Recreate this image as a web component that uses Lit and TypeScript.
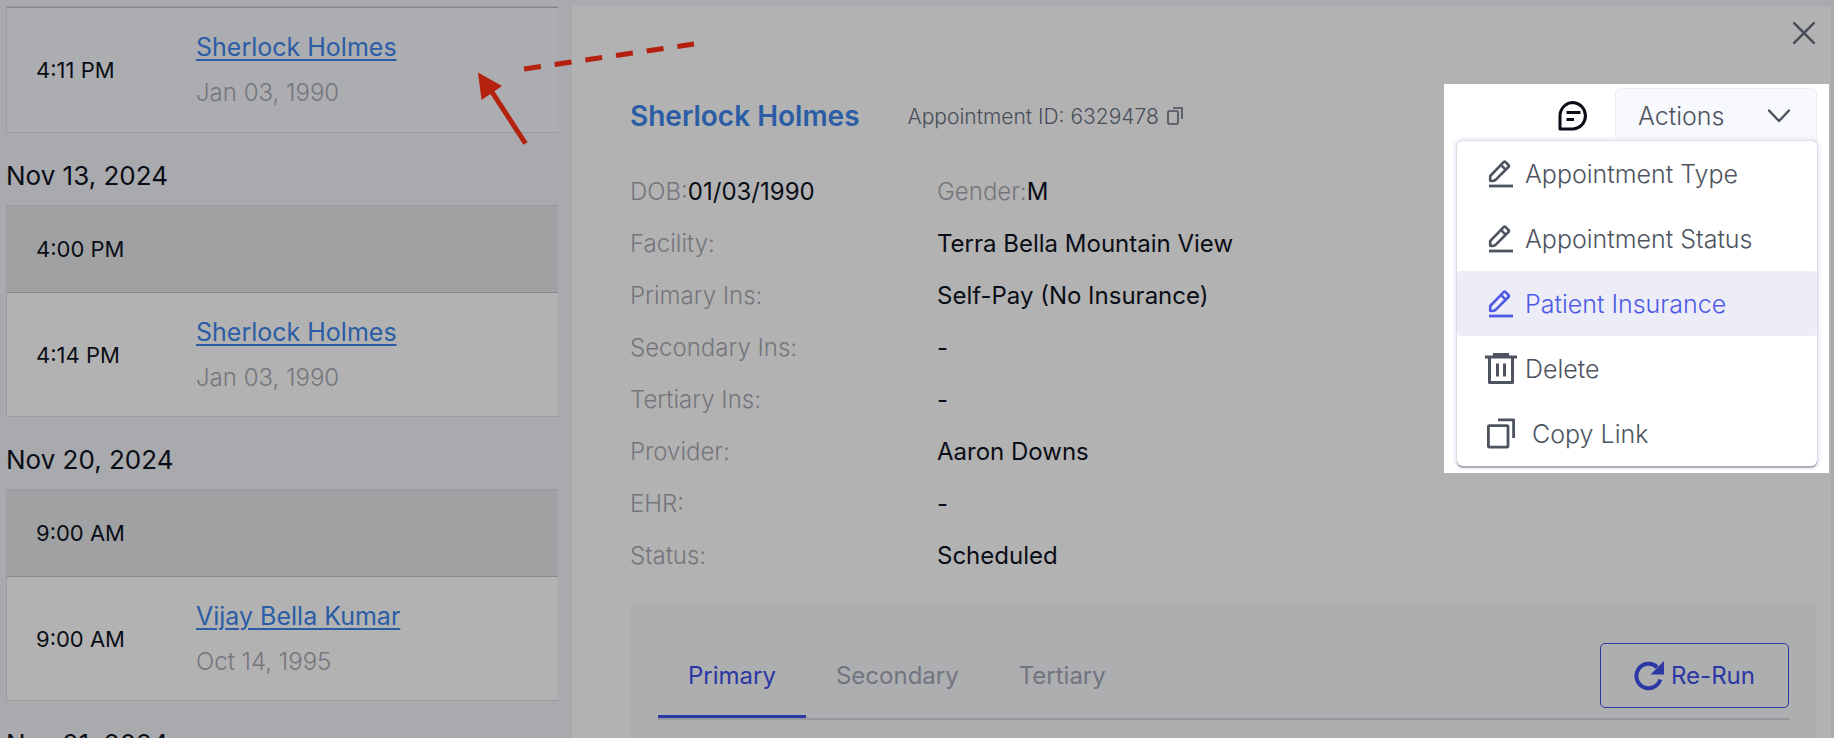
import { LitElement, html, css, svg, nothing } from "lit";
import { customElement, state } from "lit/decorators.js";
import { classMap } from "lit/directives/class-map.js";

interface Visit {
  time: string;
  name: string;
  born: string;
}

interface Day {
  date?: string;
  slot?: string;
  visits: Visit[];
}

const DAYS: Day[] = [
  { visits: [{ time: "4:11 PM", name: "Sherlock Holmes", born: "Jan 03, 1990" }] },
  {
    date: "Nov 13, 2024",
    slot: "4:00 PM",
    visits: [{ time: "4:14 PM", name: "Sherlock Holmes", born: "Jan 03, 1990" }],
  },
  {
    date: "Nov 20, 2024",
    slot: "9:00 AM",
    visits: [{ time: "9:00 AM", name: "Vijay Bella Kumar", born: "Oct 14, 1995" }],
  },
  { date: "Nov 21, 2024", visits: [] },
];

const DETAILS: [string, string][] = [
  ["Facility:", "Terra Bella Mountain View"],
  ["Primary Ins:", "Self-Pay (No Insurance)"],
  ["Secondary Ins:", "-"],
  ["Tertiary Ins:", "-"],
  ["Provider:", "Aaron Downs"],
  ["EHR:", "-"],
  ["Status:", "Scheduled"],
];

const pencil = svg`
  <g fill="none" stroke="currentColor" stroke-width="2.600" stroke-linejoin="round">
    <path d="M5.2 22.800V18L18.600 4.200Q19.600 3.200 20.600 4.200L23.400 7Q24.400 8 23.400 9L10.600 21.800Q8.600 23.600 5.200 22.800Z"/>
    <path d="M16.200 7.200L20.600 11.600"/>
    <path d="M4 28H28" stroke-width="2.800"/>
  </g>`;

const trash = svg`
  <g fill="none" stroke="currentColor">
    <path d="M4.500 5V29.500H27.500V5" stroke-width="3" stroke-linejoin="round"/>
    <path d="M0 4H32" stroke-width="3"/>
    <path d="M8 1.500H24" stroke-width="4"/>
    <path d="M12.500 10.500V23.500M19.500 10.500V23.500" stroke-width="3"/>
  </g>`;

const copy = svg`
  <g fill="none" stroke="currentColor" stroke-width="2.800" stroke-linejoin="round">
    <rect x="3.400" y="7.600" width="19.600" height="21.600" rx="1"/>
    <path d="M13 1.800H28.600V20"/>
  </g>`;

const MENU = [
  { label: "Appointment Type", icon: pencil },
  { label: "Appointment Status", icon: pencil },
  { label: "Patient Insurance", icon: pencil },
  { label: "Delete", icon: trash },
  { label: "Copy Link", icon: copy, wide: true },
];

const TABS = ["Primary", "Secondary", "Tertiary"];

@customElement("visit-list")
export class VisitList extends LitElement {
  static styles = css`
    :host {
      display: block;
      padding: 6px 14px 0 6px;
    }
    h2 {
      margin: 0;
      padding-top: 14px;
      font-size: 26px;
      font-weight: 400;
      line-height: 58px;
    }
    .card {
      border: 1px solid #9b9c9f;
      border-right: 0;
    }
    .slot {
      padding-left: 29px;
      background: #a0a1a3;
      border-bottom: 1px solid #86888f;
      font-size: 22px;
      line-height: 86px;
    }
    .visit {
      display: grid;
      grid-template-columns: 160px 1fr;
      align-items: center;
      padding: 16px 0 15px 29px;
      background: #b2b2b2;
      line-height: 46px;
      font-size: 25px;
    }
    .current {
      padding-bottom: 16px;
      border-top: 1px solid #838487;
      background: #acadb1;
    }
    .time {
      font-size: 22px;
    }
    .name {
      color: #2a5da5;
      text-decoration-thickness: 2px;
      text-underline-offset: 3px;
    }
    .born {
      color: #74767d;
      font-size: 24px;
      font-weight: 300;
    }
  `;

  render() {
    return DAYS.map(
      (day) => html`
        ${day.date ? html`<h2>${day.date}</h2>` : nothing}
        ${day.visits.length
          ? html`<div class="card">
              ${day.slot ? html`<div class="slot">${day.slot}</div>` : nothing}
              ${day.visits.map(
                (v) => html`<div class=${classMap({ visit: true, current: !day.slot })}>
                  <span class="time">${v.time}</span>
                  <div>
                    <a class="name" href="#">${v.name}</a>
                    <div class="born">${v.born}</div>
                  </div>
                </div>`
              )}
            </div>`
          : nothing}
      `
    );
  }
}

@customElement("actions-menu")
export class ActionsMenu extends LitElement {
  static styles = css`
    :host {
      position: relative;
      display: flex;
      align-items: center;
      gap: 26px;
      height: 56px;
      margin-left: auto;
      color: #4d5460;
    }
    button {
      margin: 0;
      border: 0;
      background: none;
      font: inherit;
      color: inherit;
      cursor: pointer;
    }
    svg {
      display: block;
      flex: none;
    }
    .spotlight {
      position: absolute;
      top: -4px;
      right: -12px;
      width: 385px;
      height: 389px;
      background: #fff;
    }
    .chat {
      position: relative;
      padding: 0;
      color: #0a0d16;
    }
    .toggle {
      position: relative;
      display: flex;
      align-items: center;
      justify-content: space-between;
      align-self: stretch;
      width: 202px;
      padding: 0 26px 0 22px;
      border: 1px solid #ededf8;
      border-radius: 5px;
      background: #f8f9fc;
      font-size: 25px;
      font-weight: 300;
    }
    .menu {
      position: absolute;
      top: 53px;
      right: 0;
      width: 360px;
      margin: 0;
      padding: 0;
      list-style: none;
      border-radius: 6px;
      background: #fff;
      box-shadow: 0 2px 1px #a9a9b2, 0 0 0 1px #dfe0ea, 0 0 3px 3px #ececf7;
    }
    .item {
      display: flex;
      align-items: center;
      gap: 8px;
      width: 100%;
      height: 65px;
      padding: 0 0 0 28px;
      border-radius: 4px;
      font-size: 25px;
      font-weight: 300;
    }
    .wide {
      gap: 15px;
    }
    .active {
      background: #ededf8;
      color: #4f5ae6;
    }
  `;

  render() {
    return html`
      <div class="spotlight"></div>
      <button class="chat" aria-label="Notes">
        <svg width="32" height="32" viewBox="0 0 32 32" fill="none" stroke="currentColor" stroke-width="3">
          <path d="M3 29V15.500A13.300 13.500 0 0 1 16.300 2.500A13.300 13.300 0 0 1 16.300 29Z" stroke-linejoin="round" />
          <path d="M9.500 12.500H23.500M9.500 19.500H17" />
        </svg>
      </button>
      <button class="toggle" aria-expanded="true">
        Actions
        <svg width="22" height="14" viewBox="0 0 22 14" fill="none" stroke="currentColor" stroke-width="2.500">
          <path d="M1 1.500L11 12L21 1.500" stroke-linecap="round" stroke-linejoin="round" />
        </svg>
      </button>
      <ul class="menu">
        ${MENU.map(
          (m) => html`<li>
            <button class=${classMap({ item: true, wide: !!m.wide, active: m.label === "Patient Insurance" })}>
              <svg width="32" height="32" viewBox="0 0 32 32">${m.icon}</svg>
              ${m.label}
            </button>
          </li>`
        )}
      </ul>
    `;
  }
}

@customElement("app-root")
export class AppRoot extends LitElement {
  @state() private tab = "Primary";

  static styles = css`
    :host {
      position: relative;
      display: grid;
      grid-template-columns: 572px 1fr;
      height: 100vh;
      overflow: hidden;
      background: #a9aaad;
      color: #0a0d16;
      font-family: Inter, "Liberation Sans", sans-serif;
      font-size: 24px;
    }
    button {
      margin: 0;
      padding: 0;
      border: 0;
      background: none;
      font: inherit;
      color: inherit;
      cursor: pointer;
    }
    svg {
      display: block;
      flex: none;
    }
    .panel {
      margin: 6px 3px 0 0;
      padding: 16px 14px 0 58px;
      background: #b2b2b2;
    }
    .close {
      display: block;
      margin: 0 2px 44px auto;
      color: #484e59;
    }
    header {
      display: flex;
      align-items: center;
    }
    h1 {
      margin: 0 48px 0 0;
      color: #2a5da5;
      font-size: 28px;
      font-weight: 600;
    }
    .id {
      display: flex;
      align-items: center;
      gap: 8px;
      color: #484e59;
      font-size: 21px;
      font-weight: 300;
    }
    dl {
      margin: 22px 0 21px;
    }
    .row {
      display: grid;
      grid-template-columns: 307px 1fr;
      line-height: 52px;
    }
    .pair {
      display: flex;
    }
    dt {
      color: #74767d;
      font-weight: 300;
    }
    dd {
      margin: 0;
    }
    .coverage {
      min-height: 140px;
      padding: 40px 28px 0;
      background: #adaeb0;
    }
    .tabs {
      display: flex;
      align-items: flex-start;
      border-bottom: 2px solid #96979a;
    }
    .tab {
      padding: 0 30px 7px;
      border-bottom: 3px solid transparent;
      color: #727480;
      line-height: 65px;
    }
    .selected {
      border-color: #2b37a3;
      color: #2b37a3;
    }
    .rerun {
      display: flex;
      align-items: center;
      justify-content: center;
      gap: 7px;
      width: 189px;
      height: 65px;
      margin-left: auto;
      border: 1px solid #2b37a3;
      border-radius: 5px;
      color: #2b37a3;
    }
    .marks {
      position: absolute;
      top: 30px;
      left: 460px;
      pointer-events: none;
    }
  `;

  render() {
    return html`
      <visit-list></visit-list>
      <main class="panel">
        <button class="close" aria-label="Close">
          <svg width="22" height="22" viewBox="0 0 22 22" fill="none" stroke="currentColor" stroke-width="2.500" stroke-linecap="round">
            <path d="M1.200 1.200L20.800 20.800M20.800 1.200L1.200 20.800" />
          </svg>
        </button>
        <header>
          <h1>Sherlock Holmes</h1>
          <div class="id">
            <span>Appointment ID: 6329478</span>
            <button aria-label="Copy appointment ID">
              <svg width="16" height="19" viewBox="0 0 16 19" fill="none" stroke="currentColor" stroke-width="1.600" stroke-linejoin="round">
                <rect x="1" y="4" width="10" height="13" rx="1" />
                <path d="M6 1H15V12" />
              </svg>
            </button>
          </div>
          <actions-menu></actions-menu>
        </header>
        <dl>
          <div class="row">
            <div class="pair"><dt>DOB:</dt><dd>01/03/1990</dd></div>
            <div class="pair"><dt>Gender:</dt><dd>M</dd></div>
          </div>
          ${DETAILS.map(([label, value]) => html`<div class="row"><dt>${label}</dt><dd>${value}</dd></div>`)}
        </dl>
        <section class="coverage">
          <div class="tabs">
            ${TABS.map(
              (t) => html`<button
                class=${classMap({ tab: true, selected: t === this.tab })}
                @click=${() => (this.tab = t)}
              >${t}</button>`
            )}
            <button class="rerun">
              <svg width="30" height="30" viewBox="0 0 30 30">
                <path d="M26.300 18.500A12.200 12.200 0 1 1 23.200 6.300" fill="none" stroke="currentColor" stroke-width="4" />
                <path d="M30 0V13.500H16.500Z" fill="currentColor" />
              </svg>
              Re-Run
            </button>
          </div>
        </section>
      </main>
      <svg class="marks" width="250" height="130" viewBox="0 0 250 130" fill="none" stroke="#b4210e" stroke-width="5">
        <path d="M64 39L234 14" stroke-dasharray="17 14" />
        <path d="M65.500 113.500L30 59" />
        <path d="M18 42.500L42 56L21.500 70Z" fill="#b4210e" stroke="none" />
      </svg>
    `;
  }
}
